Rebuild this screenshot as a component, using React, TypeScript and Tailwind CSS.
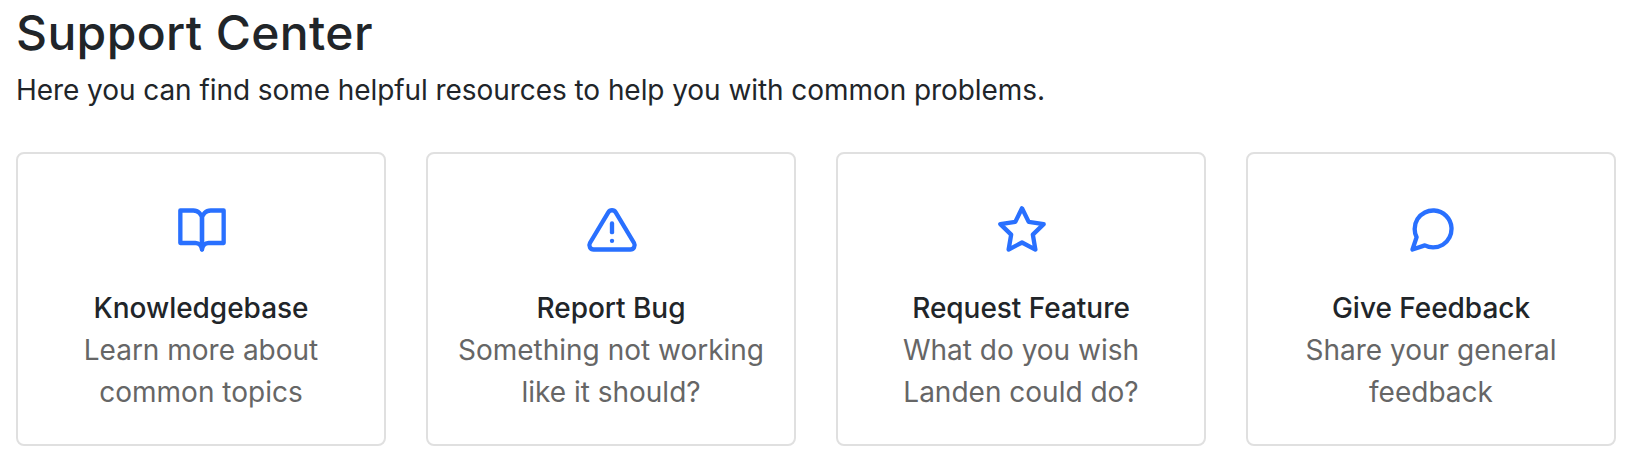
const cards = [
  {
    title: "Knowledgebase",
    lines: ["Learn more about", "common topics"],
    icon: (
      <>
        <path d="M2 3h6a4 4 0 0 1 4 4v14a3 3 0 0 0-3-3H2z" />
        <path d="M22 3h-6a4 4 0 0 0-4 4v14a3 3 0 0 1 3-3h7z" />
      </>
    ),
  },
  {
    title: "Report Bug",
    lines: ["Something not working", "like it should?"],
    icon: (
      <>
        <path d="M10.29 3.86L1.82 18a2 2 0 0 0 1.71 3h16.94a2 2 0 0 0 1.71-3L13.71 3.86a2 2 0 0 0-3.42 0z" />
        <path d="M12 9v4" />
        <path d="M12 17h.01" />
      </>
    ),
  },
  {
    title: "Request Feature",
    lines: ["What do you wish", "Landen could do?"],
    icon: <path d="M12 2l3.09 6.26L22 9.27l-5 4.87 1.18 6.88L12 17.77l-6.18 3.25L7 14.14 2 9.27l6.91-1.01z" />,
  },
  {
    title: "Give Feedback",
    lines: ["Share your general", "feedback"],
    icon: <path d="M21 11.5a8.38 8.38 0 0 1-.9 3.8 8.5 8.5 0 0 1-7.6 4.7 8.38 8.38 0 0 1-3.8-.9L3 21l1.9-5.7a8.38 8.38 0 0 1-.9-3.8 8.5 8.5 0 0 1 4.7-7.6 8.38 8.38 0 0 1 3.8-.9h.5a8.48 8.48 0 0 1 8 8z" />,
  },
];

export default function App() {
  return (
    <main className="h-[460px] bg-white px-4 pt-1 font-['Inter',sans-serif] text-[#212529]">
      <h1 className="text-[48px] leading-[58px] font-medium tracking-[0.37px]">Support Center</h1>
      <p className="mt-[7px] text-[28px] leading-[42px] tracking-[-0.065px]">
        Here you can find some helpful resources to help you with common problems.
      </p>
      <div className="mt-[41px] grid grid-cols-4 gap-10">
        {cards.map((card) => (
          <section
            key={card.title}
            className="flex h-[294px] flex-col items-center rounded-lg border-2 border-[#e0e0e0] pt-[50px] text-center text-[28px] leading-[42px]"
          >
            <svg
              viewBox="0 0 24 24"
              className="ml-[2px] h-[52px] w-[52px] shrink-0 fill-none stroke-[#2970ff] stroke-2"
              strokeLinecap="round"
              strokeLinejoin="round"
            >
              {card.icon}
            </svg>
            <h2 className="mt-[31px] font-medium tracking-[-0.03px]">{card.title}</h2>
            {card.lines.map((line) => (
              <p key={line} className="whitespace-nowrap text-[#666666]">{line}</p>
            ))}
          </section>
        ))}
      </div>
    </main>
  );
}
